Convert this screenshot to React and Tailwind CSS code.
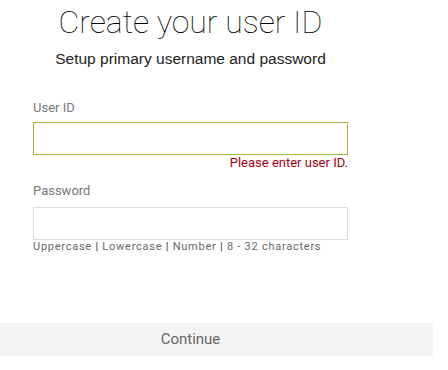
export default function App() {
  return (
    <div className="w-[448px] h-[370px] bg-white" style={{ fontFamily: "Roboto, 'Liberation Sans', sans-serif" }}>
      <div className="w-[381px] pt-[4px] text-center">
        <h1 className="text-[32px] leading-[36px] font-thin text-black">Create your user ID</h1>
        <p className="mt-[10px] text-[15.5px] leading-[18px] font-medium text-[#222]" style={{ fontFamily: "'Liberation Sans', Arial, sans-serif" }}>
          Setup primary username and password
        </p>
      </div>

      <div className="w-[381px] px-[33px] mt-[32px]">
        <label className="block text-[13px] leading-[16px] text-[#777]">User ID</label>
        <input
          type="text"
          className="mt-[6px] block w-full h-[33px] border border-[#9ab83a] outline-none"
        />
        <div className="text-right text-[13px] leading-[16px] text-[#a50011]">Please enter user ID.</div>

        <label className="block mt-[12px] text-[13px] leading-[16px] text-[#777]">Password</label>
        <input
          type="password"
          className="mt-[8px] block w-full h-[33px] border border-[#ddd] outline-none"
        />
        <div className="text-[11px] leading-[14px] tracking-[0.75px] text-[#666]">
          Uppercase <span className="text-[#333]">|</span> Lowercase <span className="text-[#333]">|</span> Number <span className="text-[#333]">|</span> 8 - 32 characters
        </div>
      </div>

      <button className="mt-[69px] w-[433px] h-[33px] bg-[#f4f4f4] pr-[52px] text-center text-[15px] text-[#666]">
        Continue
      </button>
    </div>
  )
}
